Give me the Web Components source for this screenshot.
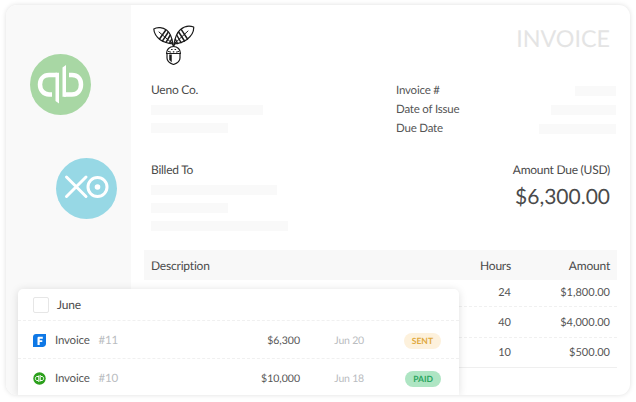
<!DOCTYPE html>
<html>
<head>
<meta charset="utf-8">
<style>
    html, body { margin: 0; background: #fff; }
    body { font-family: Lato, "Open Sans", sans-serif; color: #4a4a4a; text-rendering: geometricPrecision; }
</style>
</head>
<body>
<invoice-screen></invoice-screen>
<script>
/**
 * Grey placeholder bar standing in for redacted text.
 */
class SkeletonBar extends HTMLElement {
    constructor() {
        super();
        this.attachShadow({ mode: 'open' }).innerHTML = `
            <style>
                :host { display: block; height: 10px; background: #f9f9f9; width: var(--w, 100px); }
            </style>`;
    }
    connectedCallback() {
        this.style.setProperty('--w', `${this.getAttribute('w')}px`);
    }
}
customElements.define('skeleton-bar', SkeletonBar);

const ACORN = `
<svg width="42" height="40" viewBox="0 0 42 40" fill="none" stroke="#1c1c1c" stroke-width="1.200" stroke-linejoin="round" stroke-linecap="round">
    <path d="M20 19C19 13 17.500 8 13.500 5 10 2.500 4.500 1.500 .8 4 1 8 3.500 12 7.500 15 11.500 17.500 16 18.500 20 19z" fill="#fff"/>
    <path d="M6.500 14 12.500 5.500M9.500 15.800 15 7.500M13 17.300 17 10.500M16.500 18.300 18.500 14.500" stroke-width="1.500"/>
    <path d="M20 19 6 7" stroke-width="1"/>
    <path d="M21 19C22 13 23.500 8 27.500 4.500 31 1.500 36.500 .5 40.700 2 41 6.500 38.500 11 34 14.500 30 17.500 25 18.500 21 19z" fill="#fff"/>
    <path d="M34.500 14 28.500 4.800M31.500 16 26 7.500M28 17.500 24 10.500M24.500 18.500 22.500 14.500" stroke-width="1.500"/>
    <path d="M21 19 35 6" stroke-width="1"/>
    <path d="M19 17.500 20.500 21.500 22.500 17.500" stroke-width="1.200"/>
    <path d="M13.500 28.500C13.500 24.500 16.500 21.500 20.500 21.500S27.500 24.500 27.500 28.500z" fill="#fff"/>
    <path d="M15.500 26.500h.6M18.500 24.500h.6M22 24.500h.6M25 26.500h.6M17 27h.6M20.300 26.800h.6M23.500 27h.6" stroke-width="1.200"/>
    <path d="M14 28.500V33c0 2.800 3 5.300 6.500 6.500C24 38.300 27 35.800 27 33v-4.500z" fill="#fff"/>
    <path d="M16.500 30v5l2 1.800V30z" fill="#1c1c1c" stroke-width=".5"/>
</svg>`;

const BRAND_LOGOS = {
    qb: `
<svg width="61" height="61" viewBox="0 0 61 61" fill="none" stroke="#fff" stroke-width="4.500" stroke-linecap="butt">
    <circle cx="30.500" cy="30.500" r="30.500" fill="#a8d7a4" stroke="none"/>
    <path d="M27 21H19C13.500 21 10 25 10 30.500S13.500 40.500 19 40.500H22"/>
    <path d="M34 40.500H42C47.500 40.500 51 36.500 51 30.500S47.500 21 42 21H39"/>
    <path d="M25.500 18.800H29V49.500L25.500 47z" fill="#fff" stroke="none"/>
    <path d="M32.500 42.800H36V11L32.500 13.500z" fill="#fff" stroke="none"/>
</svg>`,
    xo: `
<svg width="61" height="61" viewBox="0 0 61 61" fill="none" stroke="#fff" stroke-width="3" stroke-linecap="round">
    <circle cx="30.500" cy="30.500" r="30.500" fill="#97d8e5" stroke="none"/>
    <path d="M10.500 19 30 38.500M30 19 10.500 38.500"/>
    <circle cx="41.500" cy="29" r="9.500"/>
    <circle cx="41.500" cy="29" r="2.800" fill="#fff" stroke="none"/>
</svg>`,
};

/**
 * Faded integration logo that sits in the grey sidebar.
 */
class BrandBadge extends HTMLElement {
    constructor() {
        super();
        this.attachShadow({ mode: 'open' }).innerHTML = `
            <style>
                :host { display: block; width: 61px; height: 61px; }
                svg { display: block; }
            </style>`;
    }
    connectedCallback() {
        this.shadowRoot.innerHTML += BRAND_LOGOS[this.getAttribute('name')];
    }
}
customElements.define('brand-badge', BrandBadge);

const lineTemplate = document.createElement('template');
lineTemplate.innerHTML = `
    <style>
        :host {
            box-sizing: border-box;
            display: grid;
            grid-template-columns: 1fr 80px 99px;
            align-items: center;
            height: 30px;
            padding: 0 7px;
            font-size: 11px;
            text-align: right;
            border-bottom: 1px dashed #f0f0f0;
            color: #555;
        }
        :host([last]) { border-bottom: 1px solid #efefef; }
        :host([head]) { background: #f8f8f8; border: 0; font-size: 12px; letter-spacing: -.2px; color: #4a4a4a; }
        .desc { text-align: left; }
    </style>
    <span class="desc"><slot name="desc"></slot></span>
    <span><slot name="hours"></slot></span>
    <span><slot name="amount"></slot></span>
`;

/**
 * One row of the line items table: description, hours and amount.
 */
class InvoiceLine extends HTMLElement {
    constructor() {
        super();
        this.attachShadow({ mode: 'open' }).appendChild(lineTemplate.content.cloneNode(true));
    }
}
customElements.define('invoice-line', InvoiceLine);

const ICON_F = `
<svg width="13" height="13" viewBox="0 0 13 13">
    <path d="M3 0H13V9.500C13 11.500 11.500 13 9.500 13H0V3C0 1.300 1.300 0 3 0z" fill="#0e78e6"/>
    <path d="M4.500 11V4.200C4.500 3.300 5 2.800 6 2.800H9.800V4.800H6.700V6.200H9.300V8.100H6.700V11z" fill="#fff"/>
</svg>`;

const ICON_QB = `
<svg width="13" height="13" viewBox="0 0 13 13" fill="none" stroke="#fff" stroke-width="1">
    <circle cx="6.500" cy="6.500" r="6.200" fill="#2ca01c" stroke="none"/>
    <path d="M5.800 4.500H4C3 4.500 2.400 5.500 2.400 6.500S3 8.500 4 8.500H5M5.800 3.500V10"/>
    <path d="M7.200 8.500H9C10 8.500 10.600 7.500 10.600 6.500S10 4.500 9 4.500H8M7.200 3V9.500"/>
</svg>`;

const rowTemplate = document.createElement('template');
rowTemplate.innerHTML = `
    <style>
        :host {
            box-sizing: border-box;
            display: grid;
            grid-template-columns: 22px 1fr 86px 64px 77px;
            align-items: center;
            height: 38px;
            padding: 2px 18px 0 15px;
            font-size: 10.500px;
            border-top: 1px dashed #f0f0f0;
            color: #555;
        }
        .icon { display: flex; }
        .name { font-size: 11.500px; letter-spacing: -.2px; }
        .num { color: #b9bcc0; margin-left: 9px; }
        .total { text-align: right; }
        .date { text-align: right; color: #b9bcc0; letter-spacing: -.2px; }
        .status { justify-self: end; }
        .pill {
            display: block;
            height: 16px;
            line-height: 16px;
            border-radius: 8px;
            font-size: 8.500px;
            font-weight: 700;
        }
        .sent { background: #fdf1dc; color: #e0a83a; padding: 0 8px; }
        .paid { background: #aee5c3; color: #2aa65f; padding: 0 8px; }
    </style>
    <span class="icon"></span>
    <span class="name">Invoice<span class="num"></span></span>
    <span class="total"></span>
    <span class="date"></span>
    <span class="status"><span class="pill"></span></span>
`;

/**
 * Invoice row of the floating list, filled in from its attributes.
 */
class InvoiceRow extends HTMLElement {
    constructor() {
        super();
        this.attachShadow({ mode: 'open' }).appendChild(rowTemplate.content.cloneNode(true));
    }

    connectedCallback() {
        const root = this.shadowRoot;
        const status = this.getAttribute('status');
        root.querySelector('.icon').innerHTML = this.getAttribute('source') === 'qb' ? ICON_QB : ICON_F;
        root.querySelector('.num').textContent = this.getAttribute('num');
        root.querySelector('.total').textContent = this.getAttribute('total');
        root.querySelector('.date').textContent = this.getAttribute('date');
        root.querySelector('.pill').textContent = status;
        root.querySelector('.pill').classList.add(status.toLowerCase());
    }
}
customElements.define('invoice-row', InvoiceRow);

const listTemplate = document.createElement('template');
listTemplate.innerHTML = `
    <style>
        :host {
            position: absolute;
            left: 12px;
            top: 284px;
            bottom: 0;
            width: 441px;
            overflow: hidden;
            background: #fff;
            border-radius: 5px 5px 0 0;
            box-shadow: 0 1px 8px rgba(0, 0, 0, .13);
        }
        .head {
            display: flex;
            align-items: center;
            gap: 8px;
            height: 31px;
            padding-left: 15px;
            font-size: 12px;
            letter-spacing: -.2px;
            color: #4a4a4a;
        }
        .check {
            width: 14px;
            height: 14px;
            border: 1px solid #e6e6e6;
            border-radius: 2px;
        }
    </style>
    <div class="head"><span class="check"></span><slot name="title"></slot></div>
    <slot></slot>
`;

/**
 * Floating month list that lies over the bottom of the invoice.
 */
class MonthList extends HTMLElement {
    constructor() {
        super();
        this.attachShadow({ mode: 'open' }).appendChild(listTemplate.content.cloneNode(true));
    }
}
customElements.define('month-list', MonthList);

const screenTemplate = document.createElement('template');
screenTemplate.innerHTML = `
    <style>
        *, *::before, *::after { box-sizing: border-box; }
        :host { display: block; box-sizing: border-box; width: 636px; height: 402px; padding: 5px 6px 7px; }
        .card {
            position: relative;
            display: flex;
            height: 390px;
            overflow: hidden;
            background: #fff;
            border-radius: 11px;
            box-shadow: 0 0 5px rgba(0, 0, 0, .13);
        }
        .side {
            flex: none;
            width: 125px;
            padding: 49px 0 0 24px;
            background: #f9f9f9;
        }
        .side brand-badge + brand-badge { margin: 43px 0 0 26px; }
        .main { flex: 1; padding: 20px 13px 0 13px; }
        .top { display: flex; justify-content: space-between; height: 55px; padding-left: 9px; }
        .top svg { display: block; }
        .title { padding: 0 7px 0 0; font-size: 23.300px; line-height: 26px; color: #e4e4e4; }
        .parties { display: grid; grid-template-columns: 245px 1fr; padding: 0 7px; font-size: 12px; letter-spacing: -.25px; color: #4a4a4a; }
        .block { display: flex; flex-direction: column; }
        .block .name { height: 20px; line-height: 20px; margin-bottom: 5px; }
        .block skeleton-bar + skeleton-bar { margin-top: 8px; }
        .meta { display: flex; flex-direction: column; margin-top: 1px; font-size: 11.500px; letter-spacing: -.2px; }
        .meta div { display: flex; justify-content: space-between; align-items: center; height: 19px; margin-right: -6px; color: #555; }
        .billed { margin-top: 22px; }
        .due { text-align: right; }
        .due .label { height: 20px; line-height: 20px; }
        .due .sum { font-size: 21px; letter-spacing: 0; line-height: 32px; margin-top: 1px; color: #4a4a4a; }
        .lines { margin-top: 19px; }
        invoice-line.r1 { height: 27px; padding-bottom: 2px; }
        invoice-line.r2 { height: 31px; }
    </style>
    <div class="card">
        <div class="side">
            <brand-badge name="qb"></brand-badge>
            <brand-badge name="xo"></brand-badge>
        </div>
        <div class="main">
            <div class="top">
                <span class="logo">${ACORN}</span>
                <span class="title">INVOICE</span>
            </div>
            <div class="parties">
                <div class="block">
                    <div class="name">Ueno Co.</div>
                    <skeleton-bar w="112"></skeleton-bar>
                    <skeleton-bar w="77"></skeleton-bar>
                </div>
                <div class="meta">
                    <div>Invoice #<skeleton-bar w="41"></skeleton-bar></div>
                    <div>Date of Issue<skeleton-bar w="65"></skeleton-bar></div>
                    <div>Due Date<skeleton-bar w="77"></skeleton-bar></div>
                </div>
                <div class="block billed">
                    <div class="name">Billed To</div>
                    <skeleton-bar w="126"></skeleton-bar>
                    <skeleton-bar w="77"></skeleton-bar>
                    <skeleton-bar w="137"></skeleton-bar>
                </div>
                <div class="due billed">
                    <div class="label">Amount Due (USD)</div>
                    <div class="sum">$6,300.00</div>
                </div>
            </div>
            <div class="lines">
                <invoice-line head>
                    <span slot="desc">Description</span>
                    <span slot="hours">Hours</span>
                    <span slot="amount">Amount</span>
                </invoice-line>
                <invoice-line class="r1"><span slot="hours">24</span><span slot="amount">$1,800.00</span></invoice-line>
                <invoice-line class="r2"><span slot="hours">40</span><span slot="amount">$4,000.00</span></invoice-line>
                <invoice-line last><span slot="hours">10</span><span slot="amount">$500.00</span></invoice-line>
            </div>
        </div>
        <month-list>
            <span slot="title">June</span>
            <invoice-row source="f" num="#11" total="$6,300" date="Jun 20" status="SENT"></invoice-row>
            <invoice-row source="qb" num="#10" total="$10,000" date="Jun 18" status="PAID"></invoice-row>
        </month-list>
    </div>
`;

/**
 * The whole picture: invoice card with sidebar and floating list.
 */
class InvoiceScreen extends HTMLElement {
    constructor() {
        super();
        this.attachShadow({ mode: 'open' }).appendChild(screenTemplate.content.cloneNode(true));
    }
}
customElements.define('invoice-screen', InvoiceScreen);
</script>
</body>
</html>
